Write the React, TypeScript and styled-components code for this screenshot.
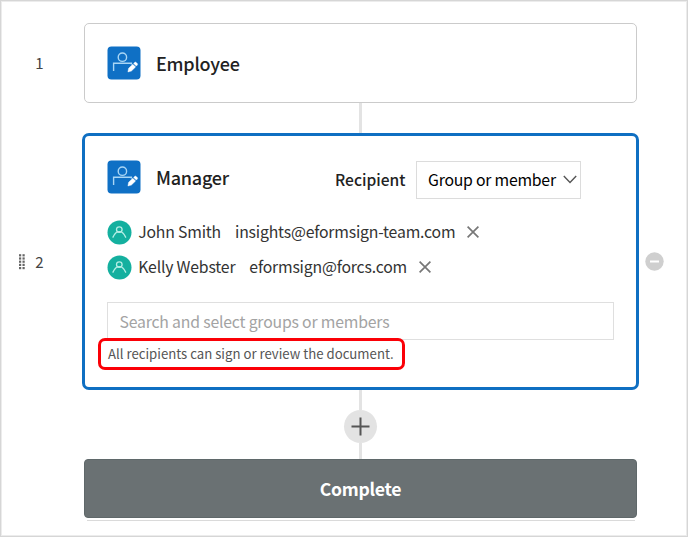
import React from "react";
import styled, { createGlobalStyle } from "styled-components";

const GlobalStyle = createGlobalStyle`
  *, *::before, *::after { box-sizing: border-box; }
  body {
    margin: 0;
    background: #fff;
    font-family: "Noto Sans CJK KR", "Noto Sans", sans-serif;
    color: #222;
  }
`;

const Frame = styled.main`
  width: 688px;
  height: 537px;
  padding: 22px 0 0;
  border: 1px solid #d6d6d6;
  box-shadow: inset 0 0 0 1px #ececec;
  display: flex;
  flex-direction: column;
  overflow: hidden;
`;

const StepRow = styled.section`
  display: grid;
  grid-template-columns: 81px 557px 48px;
  align-items: center;
  flex: none;
`;

const StepIndex = styled.div`
  display: flex;
  align-items: center;
  justify-content: flex-end;
  gap: 9px;
  padding-right: 38.5px;
  font-size: 15px;
  line-height: 20px;
  color: #444;
`;

const Card = styled.div<{ $active?: boolean }>`
  height: ${(p) => (p.$active ? 257 : 80)}px;
  margin: ${(p) => (p.$active ? "0" : "0 2px")};
  padding: ${(p) => (p.$active ? "24px 22px 0 22px" : "22px 22px 0")};
  border: ${(p) => (p.$active ? "3px solid #0f6fc2" : "1px solid #cbcbcb")};
  border-radius: ${(p) => (p.$active ? 7 : 5)}px;
  background: #fff;
`;

const CardHeader = styled.header<{ $tall?: boolean }>`
  display: flex;
  align-items: ${(p) => (p.$tall ? "flex-start" : "center")};
  height: ${(p) => (p.$tall ? 39 : 34)}px;
`;

const Title = styled.h2<{ $offset?: number }>`
  margin: ${(p) => p.$offset ?? 0}px 0 0 15px;
  font-size: 18px;
  font-weight: 500;
  line-height: 24px;
  letter-spacing: -0.22px;
`;

const RecipientLabel = styled.span`
  margin-top: 7px;
  margin-left: auto;
  margin-right: 10.5px;
  font-size: 15.6px;
  line-height: 24px;
  font-weight: 500;
`;

const Select = styled.button`
  width: 165px;
  height: 38px;
  margin-top: 1px;
  margin-right: 33px;
  padding: 0 3px 1px 11px;
  border: 1px solid #dcdcdc;
  background: #fff;
  display: flex;
  align-items: center;
  justify-content: space-between;
  font: 400 15.8px/24px "Noto Sans CJK KR", sans-serif;
  letter-spacing: -0.23px;
  color: #000;
  white-space: nowrap;
`;

const Members = styled.ul`
  list-style: none;
  margin: 16px 0 0;
  padding: 0;
`;

const Member = styled.li`
  display: flex;
  align-items: center;
  height: 35px;
  font-size: 15.8px;
  letter-spacing: -0.19px;
  line-height: 24px;
  white-space: nowrap;
  color: #333;
`;

const MemberText = styled.span`
  margin: -2px 0 0 6.2px;
  display: flex;
  gap: 14px;
`;

const RemoveButton = styled.button`
  margin: -1px 0 0 11.8px;
  padding: 0;
  border: 0;
  background: none;
  display: flex;
`;

const SearchInput = styled.input`
  display: block;
  width: 507px;
  height: 38px;
  margin-top: 17px;
  padding: 0 11px 0 11.5px;
  border: 1px solid #dfdfdf;
  border-radius: 0;
  font: 400 15.8px/24px "Noto Sans CJK KR", sans-serif;
  letter-spacing: -0.19px;
  &::placeholder { color: #a3a3a3; opacity: 1; }
`;

const Hint = styled.p`
  width: 307px;
  height: 32px;
  margin: -2px 0 0 -9px;
  padding: 0 0 0 7px;
  border: 3px solid #fb0007;
  border-radius: 7px;
  position: relative;
  font-size: 13.2px;
  line-height: 25px;
  color: #555;
  white-space: nowrap;
`;

const Connector = styled.div<{ $length: number }>`
  flex: none;
  width: 3px;
  height: ${(p) => p.$length}px;
  margin-left: 358px;
  background: #e3e3e3;
`;

const AddButton = styled.button`
  flex: none;
  width: 33px;
  height: 33px;
  margin-left: 343px;
  padding: 0;
  border: 0;
  border-radius: 50%;
  background: #e3e3e3;
  display: grid;
  place-items: center;
`;

const RowAction = styled.button`
  margin-left: 6px;
  padding: 0;
  border: 0;
  background: none;
  display: flex;
`;

const CompleteBar = styled.div`
  flex: none;
  width: 553px;
  height: 59px;
  margin-left: 83px;
  border: 1px solid #5f686a;
  border-radius: 4px;
  background: #6a7173;
  color: #fff;
  font-size: 17.6px;
  font-weight: 700;
  letter-spacing: -0.25px;
  line-height: 58px;
  text-align: center;
`;

const BarShadow = styled.div`
  flex: none;
  width: 548px;
  height: 1px;
  margin: 2px 0 0 86px;
  background: #dadada;
`;

const RoleIcon = () => (
  <svg width="34" height="34" viewBox="0 0 34 34" fill="none">
    <rect x=".5" y=".5" width="33" height="33" rx="4" fill="#0f70c5" />
    <g stroke="#a9d6f5" strokeWidth="1.4">
      <circle cx="15.4" cy="11.2" r="4.2" />
      <path d="M6.6 25v-7.8h17.8v1.3" />
    </g>
    <path d="M20.9 26l.7-3.7 4.2-4.1 2.8 2.8-4.2 4.1zM26.6 17.4l1-1q.8-.7 1.6 0l1.1 1.1q.7.8 0 1.6l-1 1z" fill="#fff" stroke="#fff" strokeWidth=".4" />
  </svg>
);

const MemberIcon = () => (
  <svg width="25" height="25" viewBox="0 0 25 25" fill="none">
    <circle cx="12.5" cy="12.5" r="12" fill="#14b09f" />
    <g stroke="#b5eee5" strokeWidth="1.3">
      <circle cx="12.3" cy="9.6" r="2.8" />
      <path d="M5.7 17.6l1.9-3.3q1.6-2.6 4.7-2.6t4.7 2.6l1.9 3.3" />
    </g>
  </svg>
);

const CrossIcon = () => (
  <svg width="12" height="12" viewBox="0 0 12 12" stroke="#777" strokeWidth="1.7">
    <path d="M.6.6l10.8 10.8M11.4.6L.6 11.4" />
  </svg>
);

const ChevronIcon = () => (
  <svg width="14" height="9" viewBox="0 0 14 9" fill="none" stroke="#555" strokeWidth="1.4">
    <path d="M.8 1L7 7.5 13.2 1" />
  </svg>
);

const GripIcon = () => (
  <svg width="7" height="16" viewBox="0 0 7 16" fill="#666">
    {[0, 3.2, 6.4, 9.6, 12.8].map((y) => (
      <React.Fragment key={y}>
        <rect x="0" y={y + 0.2} width="2.2" height="2.2" />
        <rect x="3.5" y={y + 0.2} width="2.2" height="2.2" />
      </React.Fragment>
    ))}
  </svg>
);

const MinusIcon = () => (
  <svg width="19" height="19" viewBox="0 0 19 19">
    <circle cx="9.5" cy="9.5" r="9.2" fill="#cfcfcf" />
    <rect x="5" y="8.5" width="9" height="2" fill="#fff" />
  </svg>
);

const PlusIcon = () => (
  <svg width="19" height="19" viewBox="0 0 19 19" stroke="#555" strokeWidth="2">
    <path d="M9.5.5v18M.5 9.5h18" />
  </svg>
);

const members = [
  { name: "John Smith", email: "insights@eformsign-team.com" },
  { name: "Kelly Webster", email: "eformsign@forcs.com" },
];

export default function App() {
  return (
    <>
      <GlobalStyle />
      <Frame>
        <StepRow>
          <StepIndex>1</StepIndex>
          <Card>
            <CardHeader>
              <RoleIcon />
              <Title>Employee</Title>
            </CardHeader>
          </Card>
        </StepRow>
        <Connector $length={30} />
        <StepRow>
          <StepIndex>
            <GripIcon />
            2
          </StepIndex>
          <Card $active>
            <CardHeader $tall>
              <RoleIcon />
              <Title $offset={5}>Manager</Title>
              <RecipientLabel>Recipient</RecipientLabel>
              <Select>
                Group or member
                <ChevronIcon />
              </Select>
            </CardHeader>
            <Members>
              {members.map((m) => (
                <Member key={m.email}>
                  <MemberIcon />
                  <MemberText>
                    <span>{m.name}</span>
                    <span>{m.email}</span>
                  </MemberText>
                  <RemoveButton aria-label="Remove member">
                    <CrossIcon />
                  </RemoveButton>
                </Member>
              ))}
            </Members>
            <SearchInput placeholder="Search and select groups or members" />
            <Hint>All recipients can sign or review the document.</Hint>
          </Card>
          <RowAction aria-label="Remove step">
            <MinusIcon />
          </RowAction>
        </StepRow>
        <Connector $length={20} />
        <AddButton aria-label="Add step">
          <PlusIcon />
        </AddButton>
        <Connector $length={16} />
        <CompleteBar>Complete</CompleteBar>
        <BarShadow />
      </Frame>
    </>
  );
}
